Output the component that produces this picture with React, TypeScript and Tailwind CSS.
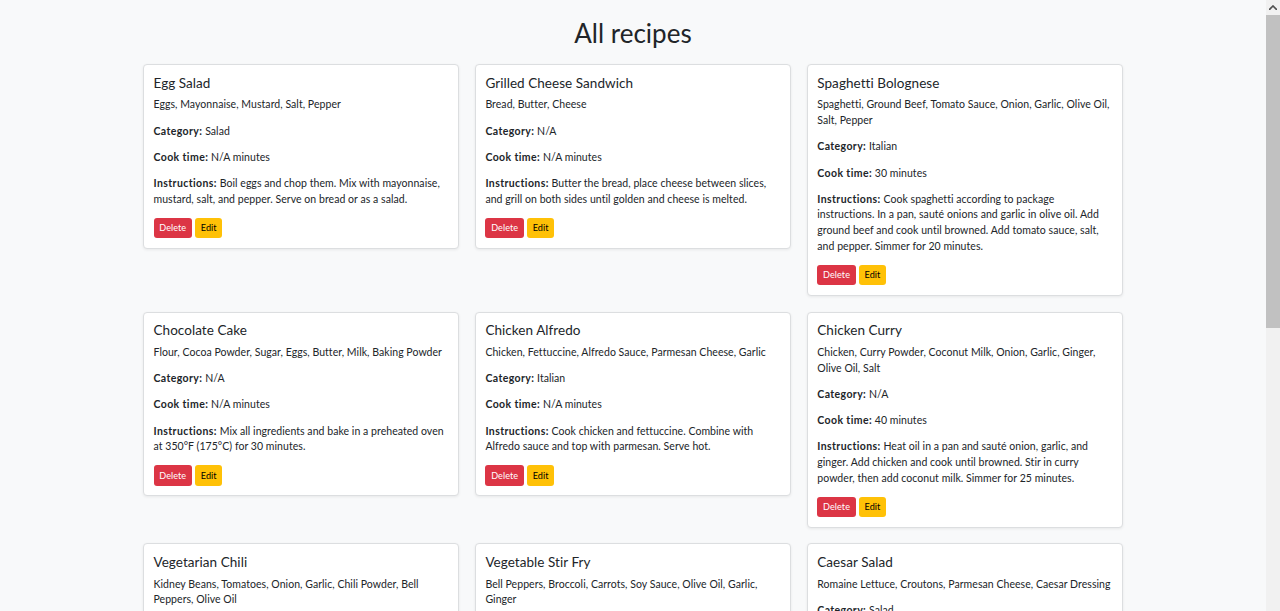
import React from 'react';

type Recipe = {
  name: string;
  ingredients: string;
  category: string;
  cookTime: string;
  instructions: string;
};

const recipes: Recipe[] = [
  {
    name: 'Egg Salad',
    ingredients: 'Eggs, Mayonnaise, Mustard, Salt, Pepper',
    category: 'Salad',
    cookTime: 'N/A',
    instructions: 'Boil eggs and chop them. Mix with mayonnaise, mustard, salt, and pepper. Serve on bread or as a salad.',
  },
  {
    name: 'Grilled Cheese Sandwich',
    ingredients: 'Bread, Butter, Cheese',
    category: 'N/A',
    cookTime: 'N/A',
    instructions: 'Butter the bread, place cheese between slices, and grill on both sides until golden and cheese is melted.',
  },
  {
    name: 'Spaghetti Bolognese',
    ingredients: 'Spaghetti, Ground Beef, Tomato Sauce, Onion, Garlic, Olive Oil, Salt, Pepper',
    category: 'Italian',
    cookTime: '30',
    instructions:
      'Cook spaghetti according to package instructions. In a pan, sauté onions and garlic in olive oil. Add ground beef and cook until browned. Add tomato sauce, salt, and pepper. Simmer for 20 minutes.',
  },
  {
    name: 'Chocolate Cake',
    ingredients: 'Flour, Cocoa Powder, Sugar, Eggs, Butter, Milk, Baking Powder',
    category: 'N/A',
    cookTime: 'N/A',
    instructions: 'Mix all ingredients and bake in a preheated oven at 350°F (175°C) for 30 minutes.',
  },
  {
    name: 'Chicken Alfredo',
    ingredients: 'Chicken, Fettuccine, Alfredo Sauce, Parmesan Cheese, Garlic',
    category: 'Italian',
    cookTime: 'N/A',
    instructions: 'Cook chicken and fettuccine. Combine with Alfredo sauce and top with parmesan. Serve hot.',
  },
  {
    name: 'Chicken Curry',
    ingredients: 'Chicken, Curry Powder, Coconut Milk, Onion, Garlic, Ginger, Olive Oil, Salt',
    category: 'N/A',
    cookTime: '40',
    instructions:
      'Heat oil in a pan and sauté onion, garlic, and ginger. Add chicken and cook until browned. Stir in curry powder, then add coconut milk. Simmer for 25 minutes.',
  },
  {
    name: 'Vegetarian Chili',
    ingredients: 'Kidney Beans, Tomatoes, Onion, Garlic, Chili Powder, Bell Peppers, Olive Oil',
    category: 'N/A',
    cookTime: 'N/A',
    instructions: 'Sauté onion and garlic, add the rest of the ingredients and simmer for 30 minutes.',
  },
  {
    name: 'Vegetable Stir Fry',
    ingredients: 'Bell Peppers, Broccoli, Carrots, Soy Sauce, Olive Oil, Garlic, Ginger',
    category: 'N/A',
    cookTime: 'N/A',
    instructions: 'Stir fry the vegetables in olive oil with garlic and ginger. Add soy sauce and serve.',
  },
  {
    name: 'Caesar Salad',
    ingredients: 'Romaine Lettuce, Croutons, Parmesan Cheese, Caesar Dressing',
    category: 'Salad',
    cookTime: 'N/A',
    instructions: 'Toss lettuce with dressing, top with croutons and parmesan.',
  },
];

const RecipeCard = ({ recipe }: { recipe: Recipe }) => (
  <div className="rounded-[4px] border border-[#dcdee0] bg-white pl-[9.5px] pr-[11.5px] pt-[10.5px] pb-[9.5px] shadow-[0_1px_3px_rgba(0,0,0,0.07)]">
    <h5 className="mb-[6.2px] text-[13.5px] leading-[15.7px] text-[#212529]">{recipe.name}</h5>
    <p className="mb-[10.5px]">{recipe.ingredients}</p>
    <p className="mb-[10.5px]">
      <strong className="font-bold tracking-[0.4px]">Category:</strong> {recipe.category}
    </p>
    <p className="mb-[10.5px]">
      <strong className="font-bold tracking-[0.4px]">Cook time:</strong> {recipe.cookTime} minutes
    </p>
    <p className="mb-[10.5px]">
      <strong className="font-bold tracking-[0.4px]">Instructions:</strong> {recipe.instructions}
    </p>
    <div className="flex gap-[3px]">
      <button className="rounded-[3px] bg-[#dc3545] px-[5.8px] py-[3.3px] text-[9.1px] leading-[13.7px] text-white">
        Delete
      </button>
      <button className="rounded-[3px] bg-[#ffc107] px-[5.8px] py-[3.3px] text-[9.1px] leading-[13.7px] text-black">
        Edit
      </button>
    </div>
  </div>
);

export default function App() {
  return (
    <div className="flex h-[611px] overflow-hidden bg-[#f8f9fa] font-['Lato',sans-serif] text-[10.5px] leading-[15.7px] tracking-[0.05px] text-[#212529]">
      <main className="flex-1 overflow-hidden">
        <h1 className="mt-[17.5px] mb-[15.3px] text-center text-[26px] leading-[31.2px] tracking-normal">All recipes</h1>
        <div className="mx-auto grid w-[980px] grid-cols-3 items-start gap-[15.7px]">
          {recipes.map((r, i) => (
            <RecipeCard key={i} recipe={r} />
          ))}
        </div>
      </main>
      <div className="flex w-[14px] flex-col bg-[#f1f1f1]">
        <div className="flex h-[15px] items-center justify-center">
          <svg width="8" height="5" viewBox="0 0 8 5">
            <path d="M0 5 L4 1 L8 5" fill="none" stroke="#505050" strokeWidth="1.6" />
          </svg>
        </div>
        <div className="mx-auto h-[313px] w-[14px] bg-[#c1c1c1]" />
      </div>
    </div>
  );
}
